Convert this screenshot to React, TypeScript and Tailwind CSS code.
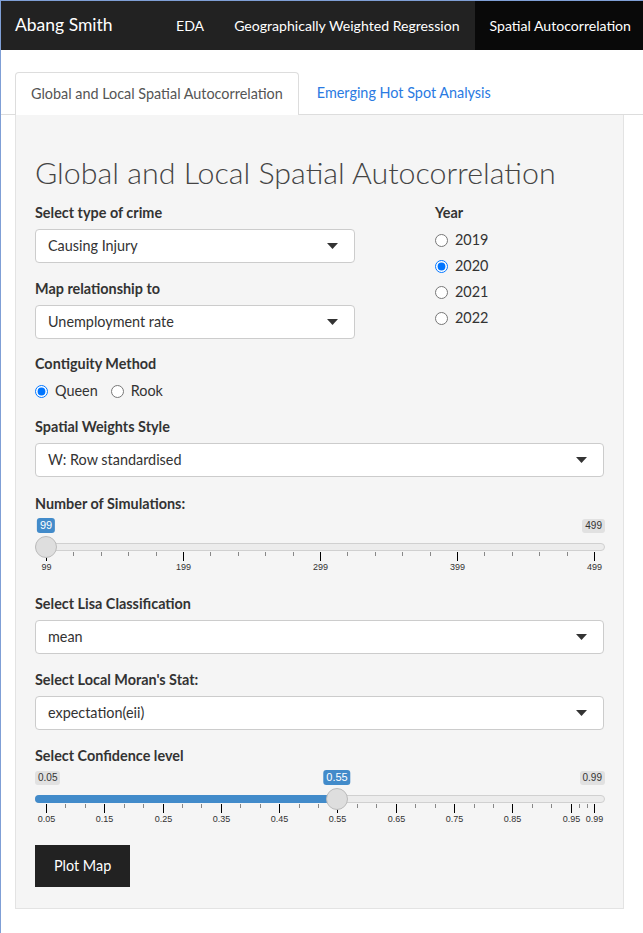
import React from "react";

const font = "font-['Lato','Liberation_Sans',sans-serif]";

function Caret() {
  return (
    <svg width="11" height="6" viewBox="0 0 11 6" className="shrink-0">
      <path d="M0 0 L11 0 L5.5 6 Z" fill="#333" />
    </svg>
  );
}

function SelectBox({ value, wide }: { value: string; wide?: boolean }) {
  return (
    <div
      className={`flex h-[34px] items-center justify-between rounded-[4px] border border-[#ccc] bg-white pl-[12px] pr-[16px] text-[14.4px] text-[#333] ${
        wide ? "w-full" : "w-[320px]"
      }`}
    >
      <span>{value}</span>
      <Caret />
    </div>
  );
}

function Label({ children }: { children: React.ReactNode }) {
  return <div className="h-[20px] text-[14.4px] leading-[20px] font-bold text-[#333]">{children}</div>;
}

function Radio({ label, checked }: { label: string; checked?: boolean }) {
  return (
    <label className="flex h-[20px] items-center gap-[7px] text-[14.4px] text-[#333]">
      <input type="radio" readOnly checked={!!checked} className="m-0 h-[13px] w-[13px]" />
      <span>{label}</span>
    </label>
  );
}

interface Tick {
  x: number;
  major: boolean;
  label?: string;
}

function Slider({
  ticks,
  handle,
  value,
  min,
  max,
  fill,
}: {
  ticks: Tick[];
  handle: number;
  value: string;
  min: string;
  max: string;
  fill?: boolean;
}) {
  return (
    <div className="relative h-[62px] w-[570px] font-['Liberation_Sans',sans-serif]">
      {min && (
        <span className="absolute top-[5px] left-0 rounded-[3px] bg-[#e1e1e1] px-[3px] text-[10px] leading-[14px] text-[#333]">
          {min}
        </span>
      )}
      <span className="absolute top-[5px] right-0 rounded-[3px] bg-[#e1e1e1] px-[3px] text-[10px] leading-[14px] text-[#333]">
        {max}
      </span>
      <span
        className="absolute top-[4px] -translate-x-1/2 rounded-[3px] bg-[#428bca] px-[3px] text-[11px] leading-[15px] text-white"
        style={{ left: handle }}
      >
        {value}
      </span>
      <div className="absolute top-[29px] right-0 left-0 h-[8px] rounded-full border border-[#d0d0d0] bg-[#ececec]" />
      {fill && (
        <div className="absolute top-[29px] left-0 h-[8px] rounded-l-full bg-[#428bca]" style={{ width: handle }} />
      )}
      {ticks.map((t, i) => (
        <React.Fragment key={i}>
          <div
            className={`absolute top-[38px] w-px ${t.major ? "h-[9px] bg-[#000]" : "h-[4px] bg-[#888]"}`}
            style={{ left: t.x }}
          />
          {t.label && (
            <span
              className="absolute top-[48px] -translate-x-1/2 text-[9px] leading-[11px] text-[#333]"
              style={{ left: t.x + 0.5 }}
            >
              {t.label}
            </span>
          )}
        </React.Fragment>
      ))}
      <div
        className="absolute top-[22px] h-[22px] w-[22px] -translate-x-1/2 rounded-full border border-[#bbb] bg-[#dedede]"
        style={{ left: handle }}
      />
    </div>
  );
}

function simTicks(): Tick[] {
  const out: Tick[] = [];
  const labels = ["99", "199", "299", "399", "499"];
  for (let i = 0; i <= 20; i++) {
    const major = i % 5 === 0;
    out.push({ x: Math.round(11 + (548 * i) / 20), major, label: major ? labels[i / 5] : undefined });
  }
  return out;
}

function confTicks(): Tick[] {
  const out: Tick[] = [];
  const step = 548 / 9.4;
  for (let i = 0; i <= 9; i++) {
    const x = 11 + step * i;
    out.push({ x: Math.round(x), major: true, label: (0.05 + i * 0.1).toFixed(2) });
    if (i < 9) {
      out.push({ x: Math.round(x + step / 3), major: false });
      out.push({ x: Math.round(x + (2 * step) / 3), major: false });
    }
  }
  const last = 11 + step * 9;
  out.push({ x: Math.round(last + 8), major: false });
  out.push({ x: Math.round(last + 16), major: false });
  out.push({ x: 559, major: true, label: "0.99" });
  return out;
}

export default function App() {
  return (
    <div className={`min-h-[933px] border-t border-l border-[#7f9fd6] bg-white ${font}`}>
      <nav className="flex h-[49px] items-stretch overflow-hidden bg-[#222] text-white">
        <div className="flex w-[160px] shrink-0 items-center pl-[14px] text-[17.5px] whitespace-nowrap">Abang Smith</div>
        <div className="flex shrink-0 items-center px-[15px] text-[14.1px]">EDA</div>
        <div className="flex shrink-0 items-center px-[15px] text-[14.1px] whitespace-nowrap">
          Geographically Weighted Regression
        </div>
        <div className="flex shrink-0 items-center bg-[#090909] px-[15px] text-[14.1px] whitespace-nowrap">
          Spatial Autocorrelation
        </div>
      </nav>

      <div className="pt-[22px]">
        <div className="flex h-[43px] border-b border-[#ddd] pl-[14px]">
          <div className="-mb-px flex items-center rounded-t-[4px] border border-b-0 border-[#ddd] bg-white px-[15px] text-[14.4px] text-[#555]">
            Global and Local Spatial Autocorrelation
          </div>
          <div className="flex items-center px-[18px] text-[14.4px] text-[#2a7ae2]">Emerging Hot Spot Analysis</div>
        </div>

        <div className="ml-[14px] w-[609px] border border-t-0 border-[#e3e3e3] bg-[#f5f5f5] px-[19px] pt-[39px] pb-[21px]">
          <h1 className="h-[36px] text-[30.4px] leading-[36px] font-light text-[#444]">
            Global and Local Spatial Autocorrelation
          </h1>

          <div className="mt-[13px] flex">
            <div className="flex w-[400px] flex-col">
              <Label>Select type of crime</Label>
              <div className="mt-[6px]">
                <SelectBox value="Causing Injury" />
              </div>
              <div className="mt-[16px]">
                <Label>Map relationship to</Label>
              </div>
              <div className="mt-[6px]">
                <SelectBox value="Unemployment rate" />
              </div>
              <div className="mt-[15px]">
                <Label>Contiguity Method</Label>
              </div>
              <div className="mt-[7px] flex gap-[13px]">
                <Radio label="Queen" checked />
                <Radio label="Rook" />
              </div>
            </div>
            <div className="flex flex-col">
              <Label>Year</Label>
              <div className="mt-[7px] flex flex-col gap-[6px]">
                <Radio label="2019" />
                <Radio label="2020" checked />
                <Radio label="2021" />
                <Radio label="2022" />
              </div>
            </div>
          </div>

          <div className="mt-[16px]">
            <Label>Spatial Weights Style</Label>
          </div>
          <div className="mt-[6px]">
            <SelectBox value="W: Row standardised" wide />
          </div>

          <div className="mt-[17px]">
            <Label>Number of Simulations:</Label>
          </div>
          <Slider ticks={simTicks()} handle={11} value="99" min="" max="499" />

          <div className="mt-[18px]">
            <Label>Select Lisa Classification</Label>
          </div>
          <div className="mt-[6px]">
            <SelectBox value="mean" wide />
          </div>

          <div className="mt-[16px]">
            <Label>Select Local Moran's Stat:</Label>
          </div>
          <div className="mt-[6px]">
            <SelectBox value="expectation(eii)" wide />
          </div>

          <div className="mt-[16px]">
            <Label>Select Confidence level</Label>
          </div>
          <Slider ticks={confTicks()} handle={302} value="0.55" min="0.05" max="0.99" fill />

          <button className="mt-[17px] h-[42px] bg-[#222] px-[19px] text-[14.4px] text-white">Plot Map</button>
        </div>
      </div>
    </div>
  );
}
